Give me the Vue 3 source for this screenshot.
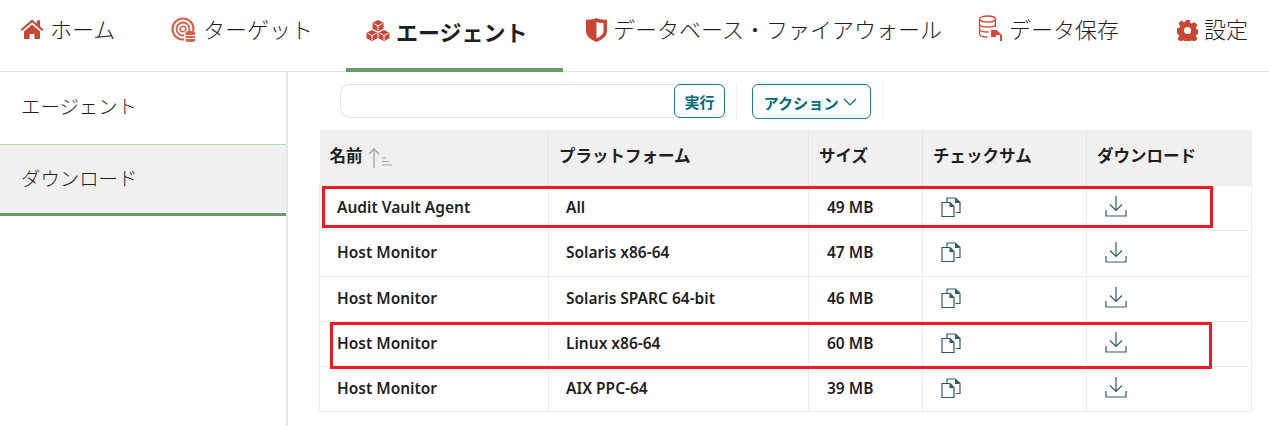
<script setup>
const rows = [
  { name: "Audit Vault Agent", platform: "All", size: "49 MB" },
  { name: "Host Monitor", platform: "Solaris x86-64", size: "47 MB" },
  { name: "Host Monitor", platform: "Solaris SPARC 64-bit", size: "46 MB" },
  { name: "Host Monitor", platform: "Linux x86-64", size: "60 MB" },
  { name: "Host Monitor", platform: "AIX PPC-64", size: "39 MB" },
];
</script>

<template>
  <div class="page">
    <nav class="tabs">
      <a class="tab">
        <svg class="ico home" width="24" height="22" viewBox="0 0 24 22">
          <path d="M0.5 11.5 12 1.5l5 4.3V2.2h3v6.2l3.5 3.1-1.4 1.5L12 4.300 1.900 13z" fill="#c74634" />
          <path d="M4 13.500 12 6.500l8 7V21h-5.500v-5h-5v5H4z" fill="#c74634" />
        </svg>
        <span>ホーム</span>
      </a>
      <a class="tab">
        <svg class="ico" width="26" height="26" viewBox="0 0 26 26" fill="none" stroke="#d9604c">
          <circle cx="12" cy="12" r="10.500" stroke-width="2.200" />
          <circle cx="12" cy="12" r="6.500" stroke-width="1.800" />
          <circle cx="12" cy="12" r="2.800" stroke-width="1.600" />
          <path d="M13 14.500h11.500V25H13z" fill="#fff" stroke="none" />
          <path d="M14.500 15.500c0-2 9.500-2 9.500 0v8c0 2-9.500 2-9.500 0z" fill="#d9604c" stroke="none" />
          <path d="M14.500 18.500h9.500M14.500 21.500h9.500" stroke="#fff" stroke-width="1.200" />
        </svg>
        <span>ターゲット</span>
      </a>
      <a class="tab active">
        <svg class="ico" width="24" height="21" viewBox="0 0 24 21" fill="#c74634">
          <path d="M12 0l5.500 2.800v6L12 11.500 6.500 8.800v-6z" />
          <path d="M6 10l5.500 2.800v5.500L6 21 .5 18.300v-5.500z" />
          <path d="M18 10l5.500 2.800v5.500L18 21l-5.500-2.700v-5.500z" />
          <path d="M7.500 3.500 12 5.800l4.500-2.300M12 5.800v4.500M1.500 13.300 6 15.500l4.500-2.200M6 15.500v4.500M13.500 13.300 18 15.500l4.500-2.200M18 15.500v4.500" fill="none" stroke="#fff" stroke-width="1" />
        </svg>
        <span>エージェント</span>
      </a>
      <a class="tab db">
        <svg class="ico shield" width="21" height="24" viewBox="0 0 21 24">
          <path d="M0 1.500C3.500 2 7 1.500 10.500 0 14 1.500 17.500 2 21 1.500V13c0 5-4.500 8.500-10.500 11C4.500 21.500 0 18 0 13z" fill="#c74634" />
          <path d="M10.500 4c2 .8 4 1.100 7 1.100V13c0 3-2.500 5.200-7 7.200z" fill="#fff" />
        </svg>
        <span>データベース・ファイアウォール</span>
      </a>
      <a class="tab">
        <svg class="ico store" width="25" height="26" viewBox="0 0 25 26" fill="none" stroke="#d9483b" stroke-width="1.300">
          <ellipse cx="9.500" cy="4" rx="8" ry="3" />
          <path d="M1.500 4v15c0 1.700 3.500 3 8 3M17.500 4v8M1.500 9c0 1.700 3.500 3 8 3s8-1.300 8-3M1.500 14c0 1.700 3.500 3 8 3h1" />
          <path d="M13 15h5.500l5.500 5v6h-2v-6h-4v2h-5z" fill="#d9483b" stroke="none" />
        </svg>
        <span>データ保存</span>
      </a>
      <a class="tab">
        <svg class="ico gear" width="21" height="21" viewBox="0 0 24 24">
          <path fill="#c74634" fill-rule="evenodd" d="M9.500 0h5l.6 3.300 2 .8 2.800-1.900 3.500 3.500-1.900 2.800.8 2 3.300.6v5l-3.300.6-.8 2 1.900 2.800-3.500 3.500-2.800-1.900-2 .8-.6 3.300h-5l-.6-3.300-2-.8-2.800 1.900-3.500-3.500 1.900-2.800-.8-2L-.6 14.500v-5l3.300-.6.8-2-1.900-2.800 3.500-3.500 2.800 1.900 2-.8zM12 8a4 4 0 1 0 0 8 4 4 0 0 0 0-8z" />
        </svg>
        <span>設定</span>
      </a>
    </nav>

    <div class="body">
      <aside class="side">
        <div class="side-item">エージェント</div>
        <div class="side-item current">ダウンロード</div>
      </aside>

      <main class="content">
        <div class="toolbar">
          <div class="search">
            <input class="search-input" type="text" />
            <button class="btn go">実行</button>
          </div>
          <span class="sep"></span>
          <button class="btn action">
            アクション
            <svg width="14" height="8" viewBox="0 0 14 8" fill="none" stroke="#006b7f" stroke-width="1.200">
              <path d="M1 1l6 6 6-6" />
            </svg>
          </button>
          <span class="sep"></span>
        </div>

        <div class="table-wrap">
          <table class="grid">
            <colgroup>
              <col class="c1" /><col class="c2" /><col class="c3" /><col class="c4" /><col class="c5" />
            </colgroup>
            <thead>
              <tr>
                <th>
                  名前
                  <svg class="sort" width="24" height="20" viewBox="0 0 24 20" fill="none" stroke="#a3a3a3">
                    <path d="M6 20V1M1 6l5-5 5 5" stroke-width="1.300" />
                    <path d="M14 10h4M14 13.500h7M14 17h10" stroke-width="1" />
                  </svg>
                </th>
                <th>プラットフォーム</th>
                <th>サイズ</th>
                <th>チェックサム</th>
                <th>ダウンロード</th>
              </tr>
            </thead>
            <tbody>
              <tr v-for="(r, i) in rows" :key="i">
                <td class="name">{{ r.name }}</td>
                <td class="platform">{{ r.platform }}</td>
                <td>{{ r.size }}</td>
                <td>
                  <svg class="cell-ico" width="20" height="20" viewBox="0 0 20 20" fill="none" stroke="#2f5a6b" stroke-width="1.200">
                    <path d="M6 5V1h8.500L19 5.500V15.500h-4.500" />
                    <path d="M14 1.500v4.500h4.500v-1L15 1.500z" fill="#2f5a6b" stroke="none" />
                    <path d="M1 5.500h8l4 4V19.500H1z" fill="#fff" />
                    <path d="M8.500 6v4h4v-1L9.500 6z" fill="#2f5a6b" stroke="none" />
                  </svg>
                </td>
                <td>
                  <svg class="cell-ico" width="22" height="21" viewBox="0 0 22 21" fill="none" stroke="#2f5a6b" stroke-width="1.200">
                    <path d="M11 0v14M5 8.500l6 6 6-6" />
                    <path d="M1 14v6h20v-6" />
                  </svg>
                </td>
              </tr>
            </tbody>
          </table>
          <div class="mark mark-top"></div>
          <div class="mark mark-linux"></div>
        </div>
      </main>
    </div>
  </div>
</template>

<style>
html,
body {
  margin: 0;
  background: #fff;
}
</style>

<style scoped>
.page {
  width: 1269px;
  height: 426px;
  overflow: hidden;
  font-family: "Noto Sans CJK JP", "Noto Sans", sans-serif;
  color: #1f1f1f;
  display: flex;
  flex-direction: column;
}

.tabs {
  display: grid;
  grid-template-columns: 151px 195px 217px 395px 199px 112px;
  height: 71px;
  border-bottom: 1px solid #dedede;
}

.tab {
  display: flex;
  align-items: flex-start;
  gap: 6px;
  padding: 13px 0 0 20px;
  font-size: 22px;
  line-height: 30px;
  font-weight: 300;
  white-space: nowrap;
  box-sizing: border-box;
}

.tab.db {
  padding-left: 23px;
}

.tab.active {
  font-weight: 700;
  padding-top: 16px;
  height: 72px;
  border-bottom: 4px solid #6a9a68;
}

.ico {
  margin-top: 4px;
  flex: none;
}

.ico.home,
.ico.shield {
  margin-top: 5px;
}

.ico.store {
  margin-top: 2px;
}

.ico.gear {
  margin-top: 7px;
}

.body {
  flex: 1;
  display: flex;
  min-height: 0;
}

.side {
  width: 286px;
  flex: none;
  border-right: 2px solid #e6e6e6;
}

.side-item {
  height: 72px;
  padding: 18px 0 0 21px;
  box-sizing: border-box;
  font-size: 19.400px;
  line-height: 32px;
  font-weight: 300;
}

.side-item.current {
  background: #f0f0f0;
  border-top: 1px solid #b9d3b6;
  border-bottom: 3px solid #6a9a68;
  padding-top: 17px;
}

.content {
  flex: 1;
  padding: 12px 0 0 31px;
}

.toolbar {
  display: flex;
  align-items: flex-start;
  height: 35px;
  padding-left: 21px;
}

.search {
  display: flex;
  width: 385px;
  height: 34px;
}

.search-input {
  flex: 1;
  min-width: 0;
  height: 34px;
  box-sizing: border-box;
  border: 1px solid #e2e2e2;
  border-right: none;
  border-radius: 10px 0 0 10px;
  outline: none;
}

.btn {
  font-family: inherit;
  font-size: 15px;
  font-weight: 700;
  color: #006b7f;
  background: #fff;
  border: 1px solid #1f7a8c;
  border-radius: 6px;
  padding: 0;
  height: 34px;
  box-sizing: border-box;
}

.go {
  width: 51px;
}

.action {
  width: 119px;
  height: 35px;
  display: flex;
  align-items: center;
  justify-content: center;
  gap: 4px;
  padding-right: 3px;
  font-size: 15.200px;
}

.sep {
  width: 1px;
  height: 36px;
  background: #eee;
  margin: -1px 15px 0 11px;
}

.table-wrap {
  position: relative;
  width: 932px;
  margin-top: 11px;
}

.grid {
  width: 932px;
  table-layout: fixed;
  border-collapse: collapse;
}

.c1 { width: 229px; }
.c2 { width: 260px; }
.c3 { width: 114px; }
.c4 { width: 164px; }
.c5 { width: 165px; }

.grid th {
  height: 55px;
  background: #f0f0f0;
  border-right: 1px solid #e4e4e4;
  text-align: left;
  padding: 0 0 4px 10px;
  box-sizing: border-box;
  font-size: 16.500px;
  font-weight: 700;
  color: #1f1f1f;
  white-space: nowrap;
}

.grid th:last-child {
  border-right: none;
}

.sort {
  vertical-align: -6px;
  margin-left: 2px;
}

.grid td {
  height: 45px;
  box-sizing: border-box;
  padding: 0 0 2px 18px;
  border: 1px solid #ececec;
  font-family: "Noto Sans", sans-serif;
  font-size: 15.500px;
  font-weight: 600;
  color: #1f1f1f;
}

.grid tbody tr:nth-child(2) td {
  height: 46px;
}

.grid td.name,
.grid td.platform {
  padding-left: 17px;
}

.cell-ico {
  display: block;
}

.mark {
  position: absolute;
  border: 3px solid #ed1c24;
  box-sizing: border-box;
}

.mark-top {
  left: 3px;
  top: 56px;
  width: 891px;
  height: 42px;
}

.mark-linux {
  left: 11px;
  top: 192px;
  width: 882px;
  height: 47px;
}
</style>
